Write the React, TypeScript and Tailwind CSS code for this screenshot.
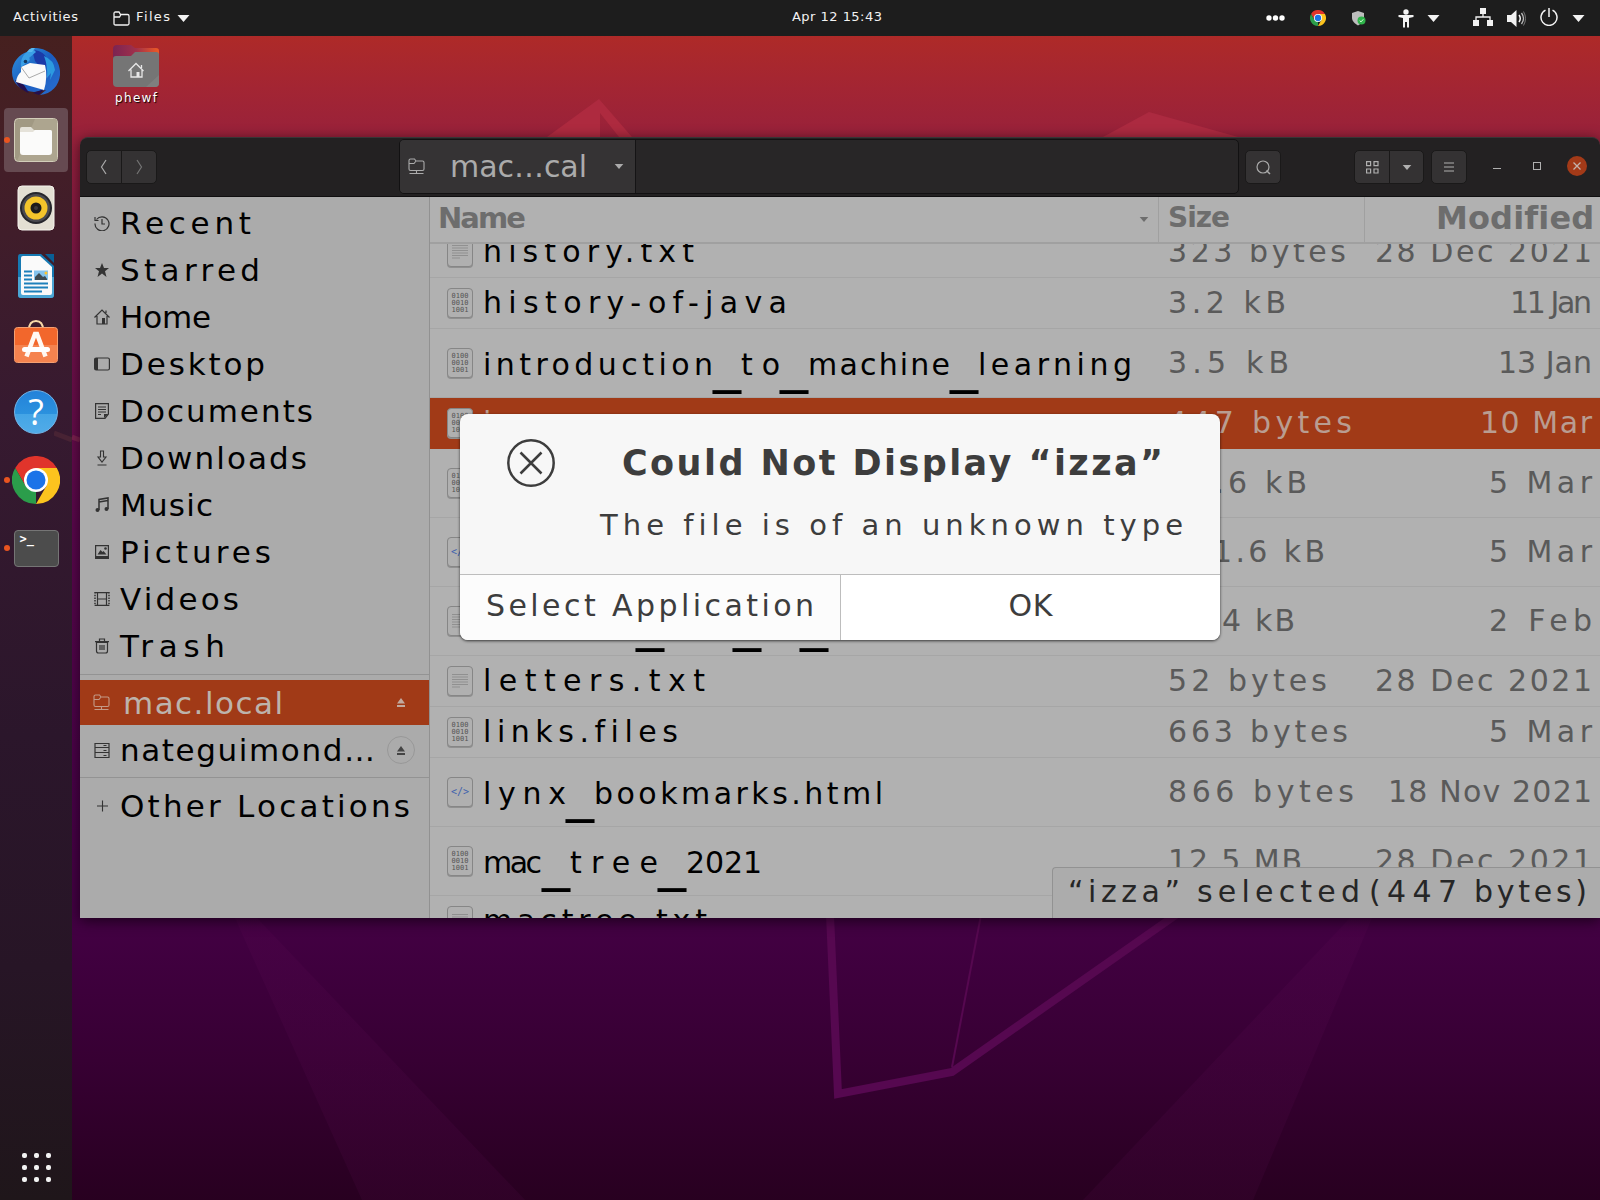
import React, { useLayoutEffect, useRef, useState } from "react";

/* Inline text tracked so that it spans exactly `w` pixels. */
function Fit({ text, w, className = "" }: { text: string; w: number; className?: string }) {
  const ref = useRef<HTMLSpanElement>(null);
  const [ls, setLs] = useState(0);
  useLayoutEffect(() => {
    if (ref.current) {
      const natural = ref.current.getBoundingClientRect().width;
      setLs((w - natural) / Math.max(1, text.length - 1));
    }
  }, [text, w]);
  return (
    <span className={`inline-block shrink-0 whitespace-pre ${className}`} style={{ width: w }}>
      <span ref={ref} style={{ letterSpacing: ls }}>{text}</span>
    </span>
  );
}

/* File name whose words are joined by wide, low underscores. */
function FileName({ name, widths }: { name: string; widths: number[] }) {
  return (
    <span className="flex items-baseline whitespace-pre">
      {name.split("_").map((word, i) => (
        <React.Fragment key={i}>
          {i > 0 && <span className="relative top-[6px] w-[28px] text-[56px] leading-[0]">_</span>}
          <Fit text={word} w={widths[i]} />
        </React.Fragment>
      ))}
    </span>
  );
}

function Svg({ w, h, vb, children, className = "" }: { w: number; h: number; vb?: string; children: React.ReactNode; className?: string }) {
  return (
    <svg width={w} height={h} viewBox={vb ?? `0 0 ${w} ${h}`} fill="none" className={`shrink-0 ${className}`}>
      {children}
    </svg>
  );
}

const Caret = ({ w = 12, h = 7, className = "" }: { w?: number; h?: number; className?: string }) => (
  <Svg w={w} h={h} vb="0 0 12 7" className={className}>
    <path d="M0 0h12L6 7z" fill="currentColor" />
  </Svg>
);

function Chrome({ size }: { size: number }) {
  return (
    <Svg w={size} h={size} vb="0 0 48 48">
      <path d="M24 12h20.8A24 24 0 0 0 3.200 12l10.400 18z" fill="#e0342b" />
      <path d="M24 24L24 48A24 24 0 0 1 3.200 12L13.600 30z" fill="#2b9d4b" />
      <path d="M34.400 30L24 48A24 24 0 0 0 44.800 12H24z" fill="#fcc31e" />
      <circle cx="24" cy="24" r="12" fill="#fff" />
      <circle cx="24" cy="24" r="9.500" fill="#1b73e8" />
    </Svg>
  );
}

function TopBar() {
  return (
    <header className="relative flex h-9 w-full items-center bg-[#1d1d1d] text-[13px] text-[#f2f2f2]">
      <Fit text="Activities" w={65} className="ml-[13px] -mt-[2px]" />
      <Svg w={17} h={15} className="ml-[35px]">
        <path d="M1 12.500v-10Q1 1 2.500 1H6l1.500 2.500H14.500Q16 3.500 16 5v7.500Q16 14 14.500 14h-12Q1 14 1 12.500zM1 6h5.500L8 3.500" stroke="#f2f2f2" strokeWidth="1.300" />
      </Svg>
      <Fit text="Files" w={34} className="ml-[6px] -mt-[2px]" />
      <Caret w={13} h={7} className="ml-[7px]" />
      <Fit text="Apr 12 15:43" w={90} className="ml-[602px] -mt-[2px]" />
      <div className="absolute right-[15px] flex h-9 items-center">
        <Svg w={19} h={6}>
          <circle cx="3" cy="3" r="2.700" fill="#fff" /><circle cx="9.500" cy="3" r="2.700" fill="#fff" /><circle cx="16" cy="3" r="2.700" fill="#fff" />
        </Svg>
        <div className="ml-[25px]"><Chrome size={16} /></div>
        <Svg w={14} h={15} className="ml-[26px]">
          <path d="M6 0l6 2v5c0 3-3 6-6 7.500C3 13 0 10 0 7V2z" fill="#bdbdbd" />
          <circle cx="9.500" cy="9.500" r="4" fill="#2fb44a" /><path d="M7.700 9.600l1.300 1.300 2.300-2.600" stroke="#d8ffd8" />
        </Svg>
        <Svg w={16} h={19} className="ml-[32px]">
          <circle cx="8" cy="3" r="2.700" fill="#f2f2f2" />
          <path d="M.5 6h15v2L11 9v9.500H9V13H7v5.500H5V9L.5 8z" fill="#f2f2f2" />
        </Svg>
        <Caret w={13} h={7} className="ml-[13px]" />
        <Svg w={20} h={18} className="ml-[33px] -mt-[2px]">
          <path d="M7 0h6v6H7zM0 12h6v6H0zM14 12h6v6h-6z" fill="#f2f2f2" /><path d="M10 5v4M3 12V9h14v3" stroke="#f2f2f2" strokeWidth="1.300" />
        </Svg>
        <Svg w={20} h={17} className="ml-[14px]">
          <path d="M0 5h4l5.500-5v17L4 12H0z" fill="#f2f2f2" /><path d="M12 5q2.500 3.500 0 7" stroke="#f2f2f2" strokeWidth="1.500" /><path d="M14.500 3q4 5.500 0 11" stroke="#bbb" strokeWidth="1.300" /><path d="M16.500 1.500q4 7 0 14" stroke="#777" />
        </Svg>
        <Svg w={18} h={18} className="ml-[13px] -mt-[2px]">
          <path d="M5.500 2.200a8 8 0 1 0 7 0M9 0v9" stroke="#f2f2f2" strokeWidth="1.500" />
        </Svg>
        <Caret w={13} h={7} className="ml-[14px]" />
      </div>
    </header>
  );
}

const dockIcons: { icon: React.ReactNode; dot?: boolean; active?: boolean }[] = [
  {
    icon: (
      <Svg w={48} h={48}>
        <defs><linearGradient id="tb" x1="0" y1="0" x2="1" y2="1"><stop offset="0" stopColor="#2f93dd" /><stop offset=".5" stopColor="#1a5cc0" /><stop offset="1" stopColor="#2a6fd0" /></linearGradient></defs>
        <path d="M20 0C35-1 47 9 48 23c1 12-7 23-20 24l6-5-12 2C8 43 0 35 0 24 0 14 8 6 15 4z" fill="url(#tb)" />
        <path d="M20 2q13 0 16 12l-5 8-8-9z" fill="#1b3aa8" />
        <path d="M3 32c3 7 8 11 14 13l-5-8zM21 45l6 2 5-6z" fill="#24104f" />
        <path d="M9 19l9-4 15 2q3 12-1 25L4 34q1-7 5-10z" fill="#fafafa" />
        <path d="M9 19l8 11 16-7" stroke="#aaa" />
        <path d="M9 19C8 10 13 2 22 2l2 2-7 6c2 1 0 4-4 6z" fill="#3ba0e6" />
        <path d="M32 8q10 4 11 14l-5 10 1-7-4 5q1-12-3-22z" fill="#2c9ae0" />
        <path d="M15 4q3-5 8-4l-3 4z" fill="#58b8ee" />
        <circle cx="13.500" cy="13.500" r="1.800" fill="#123a66" />
      </Svg>
    ),
  },
  {
    active: true, dot: true,
    icon: (
      <Svg w={46} h={46}>
        <rect x="1.500" y="1.500" width="43" height="43" rx="4" fill="#a19983" stroke="#d3ceba" />
        <path d="M22 2h20q2 0 2 2v38q0 2-2 2H4z" fill="#ada58f" />
        <path d="M7 12q0-2 2-2h9l3 3h16q2 0 2 2v20H7z" fill="#e5e2d9" />
        <path d="M7 15h13l2-2h15q2 0 2 2v20q0 3-3 3H10q-3 0-3-3z" fill="#fbfbfa" />
      </Svg>
    ),
  },
  {
    icon: (
      <Svg w={38} h={46}>
        <rect x="1" y="1" width="36" height="44" rx="4" fill="#e3dfd3" stroke="#f6f4ee" />
        <circle cx="19" cy="23" r="16" fill="#25252b" /><circle cx="19" cy="23" r="14" fill="#4a4a50" />
        <circle cx="19" cy="23" r="11.500" fill="#f3c42b" /><circle cx="19" cy="23" r="5.500" fill="#1b1b1c" /><circle cx="19" cy="23" r="2" fill="#3a3a3c" />
      </Svg>
    ),
  },
  {
    icon: (
      <Svg w={38} h={46}>
        <path d="M3 1h21l13 12v29q0 3-3 3H4q-3 0-3-3V4q0-3 2-3z" fill="#1679b2" />
        <path d="M1 24h36v18q0 3-3 3H4q-3 0-3-3z" fill="#4ba6d5" />
        <path d="M6 3h17l12 11v26q0 2-2 2H6q-2 0-2-2V5q0-2 2-2z" fill="#fafafa" />
        <path d="M28 1h9v9z" fill="#095f96" />
        <path d="M7 18.500h8M7 22.500h8M7 26.500h8M7 30.500h24M7 34.500h24M7 38.500h18" stroke="#1d80bb" strokeWidth="2" />
        <rect x="17" y="17.500" width="14" height="9.500" fill="#84c4ee" /><path d="M18 27v-3l4-4 4 4 2-1 2 3v1z" fill="#3d4a52" /><circle cx="29" cy="20" r="1.500" fill="#ffc42c" />
      </Svg>
    ),
  },
  {
    icon: (
      <Svg w={46} h={44} className="-mt-[5px]">
        <path d="M16 10q0-9 7-9t7 9" stroke="#f8d9a8" strokeWidth="2" />
        <rect x="1.500" y="7.500" width="43" height="35" rx="3" fill="#f2672c" stroke="#f5a072" />
        <path d="M2 25h42v15q0 2-2 2H4q-2 0-2-2z" fill="#f5834f" />
        <path d="M13.500 36.500L22 14h2l8.500 22.500" stroke="#fff8f2" strokeWidth="4.500" /><rect x="9" y="27" width="28" height="5" rx="2.500" fill="#fff" />
      </Svg>
    ),
  },
  {
    icon: (
      <div className="flex h-[44px] w-[44px] items-center justify-center rounded-full border border-[#73b5e9] bg-[linear-gradient(#2382d9_0%,#2b91de_54%,#44a5e6_55%,#51abe8_100%)]">
        <span className="font-['Open_Sans',sans-serif] text-[36px] leading-[42px] text-white">?</span>
      </div>
    ),
  },
  { dot: true, icon: <Chrome size={48} /> },
  {
    dot: true,
    icon: (
      <div className="h-[37px] w-[45px] rounded-[4px] border border-[#757575] bg-[#4c4c4c] pl-[5px] pt-[1px] font-['DejaVu_Sans_Mono',monospace] text-[12px] font-bold leading-[15px] text-white">&gt;_</div>
    ),
  },
];

function Dock() {
  return (
    <aside className="relative flex h-full w-[72px] shrink-0 flex-col items-center bg-[linear-gradient(#46201f_0%,#431e28_12%,#371a30_32%,#2b162b_60%,#271526_80%,#1f161a_100%)] pt-[2px]">
      <Svg w={18} h={20} className="absolute left-[54px] top-[390px]"><path d="M0 7l18 7" stroke="#482334" strokeWidth="5" /></Svg>
      {dockIcons.map((d, i) => (
        <div key={i} className="relative flex h-[68px] w-full items-center justify-center">
          {d.active && <div className="absolute inset-x-1 inset-y-[2px] rounded-[4px] bg-[#664a51]" />}
          {d.dot && <div className="absolute left-[4px] top-[31px] size-[6px] rounded-full bg-[#e95420]" />}
          <div className="relative">{d.icon}</div>
        </div>
      ))}
      <div className="mb-[18px] mt-auto grid grid-cols-3 gap-[7px]">
        {Array.from({ length: 9 }).map((_, i) => <div key={i} className="size-[5px] rounded-[2px] bg-[#f3f3f3]" />)}
      </div>
    </aside>
  );
}

function Wallpaper() {
  return (
    <Svg w={1528} h={1164} vb="72 36 1528 1164" className="absolute inset-0">
      <defs>
        <linearGradient id="wall" x1="0" y1="0" x2="0" y2="1">
          <stop offset="0" stopColor="#ae2a28" /><stop offset=".045" stopColor="#a32533" /><stop offset=".1" stopColor="#95203d" /><stop offset=".22" stopColor="#751348" />
          <stop offset=".42" stopColor="#5a074c" /><stop offset=".62" stopColor="#4b0249" /><stop offset=".77" stopColor="#420042" /><stop offset=".88" stopColor="#370033" /><stop offset="1" stopColor="#280020" />
        </linearGradient>
        <linearGradient id="beam" x1="0" y1="0" x2="0" y2="1"><stop offset="0" stopColor="#55084f" stopOpacity=".25" /><stop offset="1" stopColor="#520b48" stopOpacity=".18" /></linearGradient>
      </defs>
      <rect x="72" y="36" width="1528" height="1164" fill="url(#wall)" />
      <path d="M547 137L599 99l33 38H619L600 113v24z" fill="#ae2a3f" />
      <path d="M1103 137l46-25 89 25z" fill="#ac2a40" />
      <path d="M235 918h22L525 1200H362z" fill="url(#beam)" /><path d="M1372 918h-22L1083 1200h170z" fill="url(#beam)" />
      <path d="M830 915l8 179 114-22L1180 912" stroke="#560850" strokeWidth="8" /><path d="M981 915l-29 152" stroke="#560850" strokeWidth="2" />
      <path d="M72 437l8 3" stroke="#7d2050" strokeWidth="5" />
    </Svg>
  );
}

const S = "#333";
const places: { name: string; w: number; icon: React.ReactNode }[] = [
  { name: "Recent", w: 131, icon: <><path d="M2.500 4.500A7 7 0 1 1 1 8.500M1 2v3.500h3.500M8 4v5h3" stroke={S} strokeWidth="1.200" /></> },
  { name: "Starred", w: 140, icon: <path d="M8 1l2 5h5l-4 3.300L12.500 15 8 11.500 3.500 15 5 9.300 1 6h5z" fill={S} /> },
  { name: "Home", w: 91, icon: <><path d="M.5 8.500L8 1l7.500 7.500M3 7v8h10V7M12 4V1.500" stroke={S} strokeWidth="1.200" /><path d="M8 9h3v6H8z" fill={S} /></> },
  { name: "Desktop", w: 145, icon: <><rect x=".6" y="2" width="14.800" height="12" rx="1.500" stroke={S} strokeWidth="1.200" /><path d="M1 2h3v12H1z" fill={S} /></> },
  { name: "Documents", w: 193, icon: <><path d="M1.600.6h12.800V11L11 15.400H1.600zM4 4h8M4 6.500h8M4 9h8M4 11.500h3" stroke={S} strokeWidth="1.200" /><path d="M10 11h4.500L10 15z" fill={S} /></> },
  { name: "Downloads", w: 187, icon: <path d="M6.500 1h3v6H12l-4 5-4-5h2.500zM3.500 15h9" stroke={S} strokeWidth="1.100" /> },
  { name: "Music", w: 93, icon: <><path d="M5 13V2.500L14 1v11M5 5l9-1.500" stroke={S} strokeWidth="1.500" /><circle cx="3.500" cy="13" r="2" fill={S} /><circle cx="12.500" cy="12" r="2" fill={S} /></> },
  { name: "Pictures", w: 151, icon: <><path d="M1.600 1.600h12.800v12.800H1.600z" stroke={S} strokeWidth="1.200" /><path d="M1 12h14v3H1zM3.500 10.500L6.500 6l2 2 1-1 3 3.500z" fill={S} /><circle cx="11.500" cy="4.500" r="1.300" fill={S} /></> },
  { name: "Videos", w: 119, icon: <><path d="M1 1.600h14M1 14.400h14M3.500 1v14M12.500 1v14M3.500 8h9" stroke={S} strokeWidth="1.200" /><path d="M1 1v14M15 1v14" stroke={S} strokeWidth="1.500" strokeDasharray="1.500 1.200" /></> },
  { name: "Trash", w: 105, icon: <path d="M2.500 4.500h11V13q0 2-2 2h-7q-2 0-2-2zM1 3.600h14M5.500 3V1h5v2M6 7v5M8 7v5M10 7v5" stroke={S} strokeWidth="1.200" /> },
];

const NetFolder = ({ c }: { c: string }) => (
  <Svg w={17} h={17}><path d="M1 11V2.500Q1 1 2.500 1h4L8 3h6.500Q16 3 16 4.500V11q0 1.500-1.500 1.500h-12Q1 12.500 1 11zM1 5.500h5L8 3M1.500 15.500h14M8.500 13v2" stroke={c} strokeWidth="1.100" /></Svg>
);
const Eject = ({ c }: { c: string }) => <Svg w={8} h={9}><path d="M4 0l4 5.500H0zM0 7h8v2H0z" fill={c} /></Svg>;

function Sidebar() {
  return (
    <nav className="flex w-[350px] shrink-0 flex-col border-r border-[#919191] bg-[#ababab] pt-[2px] text-[31px] leading-[46px] text-black">
      {places.map((p) => (
        <div key={p.name} className="flex h-[47px] items-center pl-[14px]">
          <Svg w={16} h={16} className="mr-[10px]">{p.icon}</Svg>
          <Fit text={p.name} w={p.w} />
        </div>
      ))}
      <div className="mt-[5px] h-px bg-[#939393]" />
      <div className="mt-[5px] flex h-[45px] items-center bg-[#a13a17] pl-[13px] text-[#bdb3ac]">
        <NetFolder c="#c39a88" />
        <Fit text="mac.local" w={160} className="ml-[13px]" />
        <div className="ml-[114px]"><Eject c="#c1aaa0" /></div>
      </div>
      <div className="flex h-[52px] items-center pb-[2px] pl-[14px]">
        <Svg w={16} h={17} className="mr-[10px]"><path d="M1 5.500v-4h14v4zM1 5.500v5h14v-5M1 10.500v5h14v-5M9.500 3.500h3M9.500 8.500h3M9.500 13.500h3" stroke={S} strokeWidth="1.200" /></Svg>
        <Fit text="nateguimond…" w={255} />
        <div className="ml-[12px] flex size-[28px] items-center justify-center rounded-full border border-[#989898]"><Eject c="#444" /></div>
      </div>
      <div className="h-px bg-[#939393]" />
      <div className="flex h-[55px] items-center pl-[14px]">
        <Svg w={16} h={16} className="mr-[10px]"><path d="M3 8h11M8.500 2.500v11" stroke={S} strokeWidth="1.100" /></Svg>
        <Fit text="Other Locations" w={290} />
      </div>
    </nav>
  );
}

function FileIcon({ kind }: { kind: string }) {
  return (
    <div className="flex h-[30px] w-[26px] shrink-0 flex-col items-center justify-center rounded-[4px] border border-[#868686] bg-[#b0b0b0] shadow-[0_1px_0_#909090] font-['DejaVu_Sans_Mono',monospace]">
      {kind === "bin" && <div className="whitespace-pre text-[7px] leading-[7px] text-[#555]">{"0100\n0010\n1001"}</div>}
      {kind === "code" && <div className="text-[10px] leading-[12px] text-[#3f62ad]">&lt;/&gt;</div>}
      {kind === "txt" && <Svg w={16} h={16}><path d="M0 1.500h16M0 4h16M0 6.500h16M0 9h16M0 11.500h16M0 14h8" stroke="#909090" /></Svg>}
    </div>
  );
}

type Row = { kind: string; name: string; w: number[]; size: string; sw: number; date: string; dw: number; tall?: boolean; selected?: boolean };
const rows: Row[] = [
  { kind: "txt", name: "history.txt", w: [211], size: "323 bytes", sw: 178, date: "28 Dec 2021", dw: 217 },
  { kind: "bin", name: "history-of-java", w: [304], size: "3.2 kB", sw: 118, date: "11 Jan", dw: 82 },
  { kind: "bin", name: "introduction_to_machine_learning", w: [230, 39, 142, 154], size: "3.5 kB", sw: 121, date: "13 Jan", dw: 94, tall: true },
  { kind: "bin", name: "izza", w: [76], size: "447 bytes", sw: 184, date: "10 Mar", dw: 112, selected: true },
  { kind: "bin", name: "java", w: [82], size: "23.6 kB", sw: 139, date: "5 Mar", dw: 103, tall: true },
  { kind: "code", name: "java.html", w: [170], size: "231.6 kB", sw: 157, date: "5 Mar", dw: 103, tall: true },
  { kind: "txt", name: "learning_how_to_read.txt", w: [153, 69, 39, 170], size: "22.4 kB", sw: 127, date: "2 Feb", dw: 103, tall: true },
  { kind: "txt", name: "letters.txt", w: [222], size: "52 bytes", sw: 159, date: "28 Dec 2021", dw: 217 },
  { kind: "bin", name: "links.files", w: [195], size: "663 bytes", sw: 180, date: "5 Mar", dw: 103 },
  { kind: "code", name: "lynx_bookmarks.html", w: [83, 289], size: "866 bytes", sw: 186, date: "18 Nov 2021", dw: 204, tall: true },
  { kind: "bin", name: "mac_tree_2021", w: [59, 88, 76], size: "12.5 MB", sw: 134, date: "28 Dec 2021", dw: 217, tall: true },
  { kind: "txt", name: "mactree.txt", w: [224], size: "1.2 kB", sw: 118, date: "28 Dec 2021", dw: 217 },
];

function FileList() {
  return (
    <section className="relative flex min-w-0 flex-1 flex-col overflow-hidden bg-[#b1b1b1]">
      <div className="relative z-10 flex h-[47px] shrink-0 items-stretch border-b-2 border-[#a0a0a0] bg-[#b1b1b1] font-bold leading-[42px] text-[#6d6d6d]">
        <div className="flex w-[729px] items-start border-r border-[#a0a0a0] pl-[8px] text-[29px]">
          <Fit text="Name" w={88} />
          <Caret w={10} h={5} className="ml-auto mr-[9px] mt-[20px]" />
        </div>
        <div className="w-[206px] border-r border-[#a0a0a0] pl-[9px] text-[28px]"><Fit text="Size" w={62} /></div>
        <div className="flex flex-1 justify-end pr-[7px] text-[32px]"><Fit text="Modified" w={157} /></div>
      </div>
      <div className="-mt-[17px] flex flex-col text-[30px] leading-[44px]">
        {rows.map((r) => (
          <div key={r.name} className={`flex shrink-0 items-center border-b pl-[17px] pr-[8px] ${r.tall ? "h-[69px]" : "h-[51px]"} ${r.selected ? "border-[#a13a17] bg-[#a13a17] text-[#b99d91]" : "border-[#a6a6a6] text-[#5a5a5a]"}`}>
            <FileIcon kind={r.kind} />
            <div className={`ml-[10px] w-[685px] shrink-0 ${r.selected ? "" : "text-black"} ${r.tall ? "pt-1" : ""}`}><FileName name={r.name} widths={r.w} /></div>
            <Fit text={r.size} w={r.sw} />
            <div className="flex-1" />
            <Fit text={r.date} w={r.dw} />
          </div>
        ))}
      </div>
      <div className="absolute bottom-0 right-0 z-20 flex h-[51px] w-[548px] items-start rounded-tl-[4px] border-l border-t border-[#929292] bg-[#acacac] pl-[15px] text-[30px] leading-[48px] text-[#262626]">
        <Fit text="“izza”" w={112} />
        <Fit text="selected" w={163} className="ml-[17px]" />
        <Fit text="(447" w={88} className="ml-[9px]" />
        <Fit text="bytes)" w={113} className="ml-[17px]" />
      </div>
    </section>
  );
}

const HBtn = ({ children, className = "" }: { children: React.ReactNode; className?: string }) => (
  <div className={`flex h-[34px] items-center justify-center border border-[#1a1919] bg-[#343233] text-[#b0b0b0] ${className}`}>{children}</div>
);

function HeaderBar() {
  return (
    <div className="relative flex h-[60px] shrink-0 items-center rounded-t-[8px] border-b border-t border-b-[#100f10] border-t-[#383536] bg-[#232122]">
      <HBtn className="ml-[6px] w-[36px] rounded-l-[5px]"><Svg w={7} h={16} className="-ml-[2px]"><path d="M6 1L1.500 8 6 15" stroke="#aaa" strokeWidth="1.200" /></Svg></HBtn>
      <HBtn className="-ml-px w-[36px] rounded-r-[5px] bg-[#2b292a]"><Svg w={7} h={16}><path d="M1 1l4.500 7L1 15" stroke="#747474" strokeWidth="1.200" /></Svg></HBtn>
      <div className="-mt-px ml-[242px] flex h-[55px] w-[840px] rounded-[5px] border border-[#121112] bg-[#282627]">
        <div className="flex w-[236px] items-center rounded-l-[4px] border-r border-[#151415] bg-[#353334] pl-[8px] text-[#ababab]">
          <NetFolder c="#ababab" />
          <Fit text="mac…cal" w={137} className="ml-[25px] text-[30px]" />
          <Caret w={10} h={5} className="ml-[27px]" />
        </div>
      </div>
      <HBtn className="ml-[6px] w-[36px] rounded-[5px]"><Svg w={15} h={15}><circle cx="7" cy="7" r="6" stroke="#aaa" strokeWidth="1.200" /><path d="M10.500 10.500l3.500 3.500" stroke="#aaa" strokeWidth="1.500" /></Svg></HBtn>
      <HBtn className="ml-[73px] w-[36px] rounded-l-[5px]"><Svg w={13} h={13}><path d="M.6.6h4v4h-4zM8 .6h4v4H8zM.6 8h4v4h-4zM8 8h4v4H8z" stroke="#b0b0b0" strokeWidth="1.200" /></Svg></HBtn>
      <HBtn className="-ml-px w-[35px] rounded-r-[5px]"><Caret w={10} h={5} /></HBtn>
      <HBtn className="ml-[7px] w-[36px] rounded-[5px]"><Svg w={10} h={10}><path d="M0 1h10M0 5h10M0 9h10" stroke="#b0b0b0" strokeWidth="1.200" /></Svg></HBtn>
      <div className="absolute right-[13px] top-[18px] flex h-5 items-center">
        <div className="mt-[5px] h-px w-2 bg-[#b0b0b0]" />
        <div className="ml-[32px] size-2 border border-[#b0b0b0]" />
        <div className="ml-[26px] flex size-5 items-center justify-center rounded-full bg-[#a33a18]"><Svg w={8} h={8}><path d="M.5.5l7 7M7.500.5l-7 7" stroke="#c4b4ad" strokeWidth="1.300" /></Svg></div>
      </div>
    </div>
  );
}

function Dialog() {
  return (
    <div className="absolute left-[380px] top-[277px] z-30 flex h-[226px] w-[760px] flex-col overflow-hidden rounded-[8px] bg-[#f7f7f7] text-[#3d3d3d] shadow-[0_1px_3px_rgba(0,0,0,0.700)]">
      <div className="flex h-[161px] border-b border-[#bdbdbd]">
        <Svg w={48} h={48} className="ml-[47px] mt-[25px]"><circle cx="24" cy="24" r="22.700" stroke="#3d3d3d" strokeWidth="2.500" /><path d="M13.500 13.500l21 21M34.500 13.500l-21 21" stroke="#3d3d3d" strokeWidth="2.500" /></Svg>
        <div className="ml-[45px] flex flex-col">
          <Fit text="Could Not Display “izza”" w={541} className="ml-[22px] mt-[24px] text-[35px] font-bold leading-[50px]" />
          <Fit text="The file is of an unknown type" w={583} className="mt-[17px] text-[29px] leading-[40px]" />
        </div>
      </div>
      <div className="flex flex-1 text-[30px]">
        <div className="flex w-[381px] items-center justify-center border-r border-[#bdbdbd] bg-[#fcfcfc] pb-1"><Fit text="Select Application" w={328} /></div>
        <div className="flex flex-1 items-center justify-center bg-white pb-1"><Fit text="OK" w={44} /></div>
      </div>
    </div>
  );
}

function HomeFolder() {
  return (
    <div className="absolute left-[32px] top-[9px] flex w-[64px] flex-col items-center">
      <Svg w={46} h={43}>
        <defs><linearGradient id="hf" x1="0" x2="1"><stop offset="0" stopColor="#7b2452" /><stop offset=".5" stopColor="#a0304b" /><stop offset="1" stopColor="#ee5a24" /></linearGradient></defs>
        <path d="M0 15V4q0-4 4-4h14l4 3h21q3 0 3 3v9z" fill="url(#hf)" />
        <path d="M0 14q0-3 3-3h15l4-4h21q3 0 3 3v28q0 4-4 4H4q-4 0-4-4z" fill="#757575" /><path d="M46 30v8q0 4-4 4h-9z" fill="#7f7f7f" />
        <path d="M15.500 26L23 18.500l7.500 7.500M18 24.500V32h11v-7.500M28.500 23v-3" stroke="#e6e6e6" strokeWidth="1.300" /><path d="M23.500 27h3v5h-3z" fill="#e6e6e6" />
      </Svg>
      <Fit text="phewf" w={42} className="mt-[3px] text-[12px] leading-[14px] text-white [text-shadow:1px_1px_1px_#000]" />
    </div>
  );
}

export default function App() {
  return (
    <div className="flex h-[1200px] w-[1600px] flex-col overflow-hidden bg-black font-['DejaVu_Sans',sans-serif]">
      <TopBar />
      <div className="flex min-h-0 flex-1">
        <Dock />
        <main className="relative min-w-0 flex-1 overflow-hidden">
          <Wallpaper />
          <HomeFolder />
          <div className="absolute left-[8px] top-[101px] flex h-[781px] w-[1520px] flex-col rounded-t-[8px] shadow-[0_3px_14px_rgba(0,0,0,0.600)]">
            <HeaderBar />
            <div className="flex min-h-0 flex-1">
              <Sidebar />
              <FileList />
            </div>
            <Dialog />
          </div>
        </main>
      </div>
    </div>
  );
}
